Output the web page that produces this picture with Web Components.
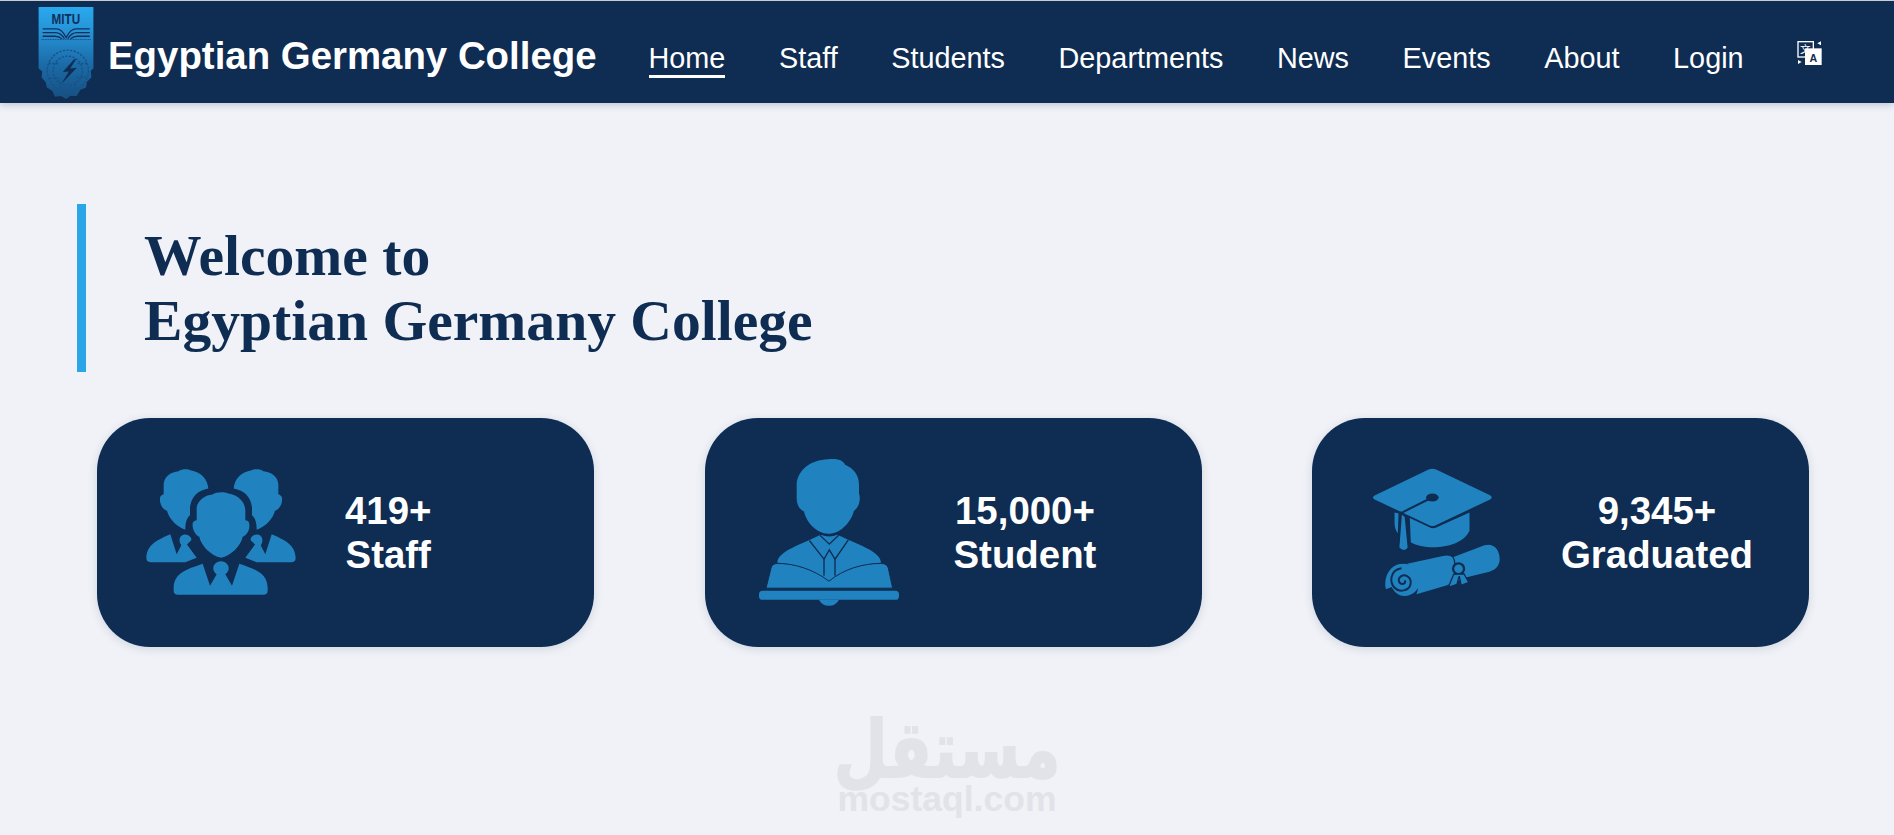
<!DOCTYPE html>
<html lang="en">
<head>
<meta charset="utf-8">
<title>Egyptian Germany College</title>
<style>
    html, body { margin: 0; padding: 0; background: #f0f2f7; }
    body { font-family: "Liberation Sans", Arial, sans-serif; height: 835px; overflow: hidden; }
</style>
</head>
<body>
<site-nav>
    <nav-link active>Home</nav-link>
    <nav-link>Staff</nav-link>
    <nav-link>Students</nav-link>
    <nav-link>Departments</nav-link>
    <nav-link>News</nav-link>
    <nav-link>Events</nav-link>
    <nav-link>About</nav-link>
    <nav-link>Login</nav-link>
    <translate-icon></translate-icon>
</site-nav>
<welcome-heading>Welcome to<br>Egyptian Germany College</welcome-heading>
<stat-row>
    <stat-card icon="staff" value="419+" label="Staff" style="--text-gap:49px"></stat-card>
    <stat-card icon="student" value="15,000+" label="Student" style="--text-gap:50px"></stat-card>
    <stat-card icon="graduated" value="9,345+" label="Graduated" style="--text-gap:50px"></stat-card>
</stat-row>
<mostaql-mark></mostaql-mark>

<script>
const DARK = '#0f2c52';
const BLUE = '#2083c0';

class SiteLogo extends HTMLElement {
    constructor() {
        super()
        this.shadow = this.attachShadow({ mode: 'open' })
    }
    connectedCallback() {
        this.shadow.innerHTML = /*html*/`
            <style>
                :host { display: block; width: 56px; height: 92px; margin-top: 2px; }
                svg { display: block; }
            </style>
            <svg width="56" height="92" viewBox="55 20 165 277">
                <defs>
                    <linearGradient id="lg" x1="0" y1="0" x2="0" y2="1">
                        <stop offset="0" stop-color="#2aa9ee"/>
                        <stop offset=".3" stop-color="#2590d2"/>
                        <stop offset=".62" stop-color="#1b6ba8"/>
                        <stop offset="1" stop-color="#174f80"/>
                    </linearGradient>
                </defs>
                <path fill="url(#lg)" d="M55 20H220V205L212 212L214 232L200 246L198 262L180 270L170 288L150 288L138 297L122 288L104 290L96 272L80 262L76 246L64 232L66 214L55 205Z"/>
                <text x="137" y="70" font-family="'Liberation Sans',sans-serif" font-weight="700" font-size="42" text-anchor="middle" textLength="86" lengthAdjust="spacingAndGlyphs" fill="#10305a">MITU</text>
                <g fill="none" stroke="#10305a" stroke-width="4">
                    <path d="M67 86H108C122 86 130 96 138 112C146 96 154 86 168 86H209"/>
                    <path d="M67 97H106C118 97 126 104 133 115M143 115C150 104 158 97 170 97H209"/>
                    <path d="M67 108H104C114 108 120 111 125 116M151 116C156 111 162 108 172 108H209"/>
                </g>
                <path d="M64 118H212" stroke="#10305a" stroke-width="2" stroke-dasharray="3 2"/>
                <g fill="none" stroke="#17538a" stroke-width="4" stroke-dasharray="7 4">
                    <circle cx="143" cy="212" r="62"/>
                    <circle cx="143" cy="212" r="44"/>
                    <path d="M85 190H118M172 190H202M88 235H116M170 232H200M120 265V240M165 268V244"/>
                </g>
                <path fill="#0f2c52" d="M162 177L128 216L146 214L124 251L170 203L150 205L168 177Z"/>
            </svg>`
    }
}
customElements.define('site-logo', SiteLogo);

class SiteNav extends HTMLElement {
    constructor() {
        super()
        this.shadow = this.attachShadow({ mode: 'open' })
    }
    connectedCallback() {
        this.shadow.innerHTML = /*html*/`
            <style>
                :host {
                    display: flex;
                    align-items: center;
                    box-sizing: border-box;
                    height: 103px;
                    border-top: 1px solid #c9ccd3;
                    padding-left: 38px;
                    background: ${DARK};
                    box-shadow: 0 2px 7px rgba(15,44,82,.22);
                    position: relative;
                }
                .brand {
                    margin: 7px 0 0 14px;
                    font: 700 38.4px "Liberation Sans", Arial, sans-serif;
                    color: #fff;
                    white-space: nowrap;
                }
                .links {
                    display: flex;
                    align-items: center;
                    gap: 53.6px;
                    margin: 13px 0 0 52px;
                }
            </style>
            <site-logo></site-logo>
            <div class="brand">Egyptian Germany College</div>
            <div class="links"><slot></slot></div>`
    }
}
customElements.define('site-nav', SiteNav);

class NavLink extends HTMLElement {
    constructor() {
        super()
        this.shadow = this.attachShadow({ mode: 'open' })
    }
    connectedCallback() {
        this.shadow.innerHTML = /*html*/`
            <style>
                :host {
                    display: block;
                    font: 400 28.8px/33px "Liberation Sans", Arial, sans-serif;
                    color: #fff;
                    white-space: nowrap;
                    border-bottom: 3px solid transparent;
                    padding-top: 3px;
                }
                :host([active]) { border-bottom-color: #fff; }
            </style>
            <slot></slot>`
    }
}
customElements.define('nav-link', NavLink);

class TranslateIcon extends HTMLElement {
    constructor() {
        super()
        this.shadow = this.attachShadow({ mode: 'open' })
    }
    connectedCallback() {
        this.shadow.innerHTML = /*html*/`
            <style>
                :host { display: block; width: 25px; height: 24px; margin-bottom: 12px; }
                svg { display: block; }
            </style>
            <svg width="25" height="24" viewBox="475 65 73 72">
                <rect x="477" y="67" width="46" height="46" fill="none" stroke="#fff" stroke-width="4"/>
                <text x="499" y="101" font-family="'Noto Sans CJK SC',sans-serif" font-size="32" text-anchor="middle" fill="#fff">文</text>
                <rect x="498" y="87" width="50" height="50" fill="#fff"/>
                <text x="523" y="127" font-family="'Liberation Sans',sans-serif" font-weight="700" font-size="32" text-anchor="middle" fill="${DARK}">A</text>
                <path fill="#fff" d="M546 66V78L535 72ZM477 122V134L488 128Z"/>
            </svg>`
    }
}
customElements.define('translate-icon', TranslateIcon);

class WelcomeHeading extends HTMLElement {
    constructor() {
        super()
        this.shadow = this.attachShadow({ mode: 'open' })
    }
    connectedCallback() {
        this.shadow.innerHTML = /*html*/`
            <style>
                :host {
                    display: block;
                    box-sizing: border-box;
                    width: fit-content;
                    height: 168px;
                    margin: 101px 0 46px 77px;
                    padding: 19px 0 0 58px;
                    border-left: 9px solid #29a5e8;
                    font: 700 57.6px/65px "Liberation Serif", "Times New Roman", serif;
                    color: ${DARK};
                    white-space: nowrap;
                }
            </style>
            <slot></slot>`
    }
}
customElements.define('welcome-heading', WelcomeHeading);

class StatRow extends HTMLElement {
    constructor() {
        super()
        this.shadow = this.attachShadow({ mode: 'open' })
    }
    connectedCallback() {
        this.shadow.innerHTML = /*html*/`
            <style>
                :host {
                    display: flex;
                    gap: 110.5px;
                    padding-left: 97px;
                }
            </style>
            <slot></slot>`
    }
}
customElements.define('stat-row', StatRow);

// iconos dibujados sobre las coordenadas del recorte ampliado x3
const ICONS = {
    staff: `
        <svg width="150" height="127" viewBox="170 180 450 380">
            <g id="side">
                <path d="M288 362C258 350 240 330 233 305C220 300 210 285 212 265C214 258 220 256 223 255L223 225C225 200 245 188 268 186C275 180 295 179 303 183C335 188 355 210 357 238C325 243 305 265 302 295L302 318C290 328 288 345 288 362Z"/>
                <path d="M171 445C173 405 205 392 243 375L262 435L276 408C268 398 268 380 284 376C297 374 308 385 306 393L293 406L322 446L288 459L183 459Q171 459 171 445Z"/>
            </g>
            <use href="#side" transform="translate(790 0) scale(-1 1)"/>
            <path d="M395 446C365 440 335 410 330 383C318 378 308 360 310 342C312 335 318 333 322 333L322 295C325 275 345 258 370 256C378 248 405 248 415 252C450 258 468 280 468 305L468 333C474 333 480 337 480 345C482 362 472 378 460 383C455 410 425 440 395 446Z"/>
            <path d="M253 535C255 490 295 480 340 464L362 530L382 495C366 485 368 458 395 456C422 458 424 485 408 495L428 530L450 464C495 480 533 490 535 535L535 545Q535 557 522 557L266 557Q253 557 253 545Z"/>
        </svg>`,
    student: `
        <svg width="140" height="147" viewBox="177 148 420 440">
            <path d="M385 372C350 370 320 340 312 305C298 298 290 285 290 265L290 220C295 180 330 150 385 148C410 146 430 150 435 165C460 175 477 195 477 225L477 252C482 262 480 290 462 303C452 340 420 372 385 372Z"/>
            <path d="M232 459C232 430 285 410 330 390L362 375Q388 385 412 375L445 390C490 410 543 430 543 459C490 462 430 480 387 515C340 480 280 462 232 459Z"/>
            <path stroke="${DARK}" stroke-width="3" d="M198 535L213 475Q216 461 232 461C280 460 340 478 387 514C430 478 490 460 545 461Q560 461 565 475L578 535Z"/>
            <g fill="none" stroke="${DARK}" stroke-width="4">
                <path d="M328 392L372 448L388 420L405 448L445 390"/>
                <path d="M360 376L388 403L416 376"/>
                <path d="M372 448L372 498M405 448L405 498"/>
            </g>
            <rect x="177" y="543" width="420" height="27" rx="11"/>
            <path d="M357 570Q365 588 387 588Q408 588 417 570Z"/>
        </svg>`,
    graduated: `
        <svg width="128" height="128" viewBox="216 172 386 384" style="margin-top:-2px">
            <path d="M385 176Q398 171 411 176L572 253Q582 260 572 266L405 345Q398 347 392 345L224 266Q214 260 224 254Z"/>
            <path d="M330 322L392 351Q400 354 408 351L510 305L510 360C495 395 445 410 400 410C375 410 350 405 333 395Z"/>
            <path stroke="${DARK}" stroke-width="5" d="M304 306L317 318L326 412Q312 430 296 412Z"/>
            <path d="M284 305L296 308L294 368Q284 355 284 335Z"/>
            <path fill="none" stroke="${DARK}" stroke-width="6" d="M385 266L305 306"/>
            <ellipse cx="398" cy="260" rx="19" ry="12" fill="${DARK}"/>
            <path d="M322 460L430 436Q448 432 460 440L555 404C585 396 601 420 601 445C601 465 590 478 570 484L505 500L440 525L350 552C362 530 350 480 322 460Z"/>
            <path d="M310 460C340 460 360 485 360 512C360 538 338 557 314 557C298 557 285 548 275 530L258 537C250 500 270 460 310 460Z"/>
            <path fill="none" stroke="${DARK}" stroke-width="6" d="M315 510C320 520 305 525 298 515C292 500 310 490 322 497C340 508 335 535 312 540C290 545 270 525 275 500C278 485 290 475 305 473"/>
            <path fill="none" stroke="${DARK}" stroke-width="4" d="M455 433C465 445 467 452 465 462"/>
            <circle cx="477" cy="475" r="20" fill="${DARK}"/>
            <path stroke="${DARK}" stroke-width="4" d="M462 492L446 531L472 522L479 497L485 525L508 516L493 490Z"/>
            <circle cx="477" cy="475" r="13"/>
        </svg>`
}

class StatCard extends HTMLElement {
    constructor() {
        super()
        this.shadow = this.attachShadow({ mode: 'open' })
    }
    connectedCallback() {
        const icon = ICONS[this.getAttribute('icon')];
        this.shadow.innerHTML = /*html*/`
            <style>
                :host {
                    display: flex;
                    align-items: center;
                    box-sizing: border-box;
                    width: 497px;
                    height: 229px;
                    flex: none;
                    border-radius: 53px;
                    background: ${DARK};
                    box-shadow: 0 2px 10px rgba(15,44,82,.14);
                }
                .icon {
                    display: flex;
                    justify-content: center;
                    width: 150px;
                    margin-left: 49px;
                    flex: none;
                    fill: ${BLUE};
                }
                .icon svg { display: block; }
                .text {
                    margin-left: var(--text-gap);
                    font: 700 38.4px/44px "Liberation Sans", Arial, sans-serif;
                    color: #fff;
                    text-align: center;
                }
            </style>
            <div class="icon">${icon}</div>
            <div class="text">
                <div>${this.getAttribute('value')}</div>
                <div>${this.getAttribute('label')}</div>
            </div>`
    }
}
customElements.define('stat-card', StatCard);

class MostaqlMark extends HTMLElement {
    constructor() {
        super()
        this.shadow = this.attachShadow({ mode: 'open' })
    }
    connectedCallback() {
        this.shadow.innerHTML = /*html*/`
            <style>
                :host {
                    display: flex;
                    flex-direction: column;
                    align-items: center;
                    margin-top: 81px;
                    color: #e2e3e8;
                    font-family: "Liberation Sans", Arial, sans-serif;
                    font-weight: 700;
                }
                .ar {
                    font: 700 62px/56px "DejaVu Sans", sans-serif;
                    -webkit-text-stroke: 1.5px #e2e3e8;
                    transform: scaleY(1.28);
                    transform-origin: 50% 88%;
                }
                .en { font-size: 35.5px; line-height: 30px; }
            </style>
            <div class="ar" lang="ar" dir="rtl">مستقل</div>
            <div class="en">mostaql.com</div>`
    }
}
customElements.define('mostaql-mark', MostaqlMark);
</script>
</body>
</html>
